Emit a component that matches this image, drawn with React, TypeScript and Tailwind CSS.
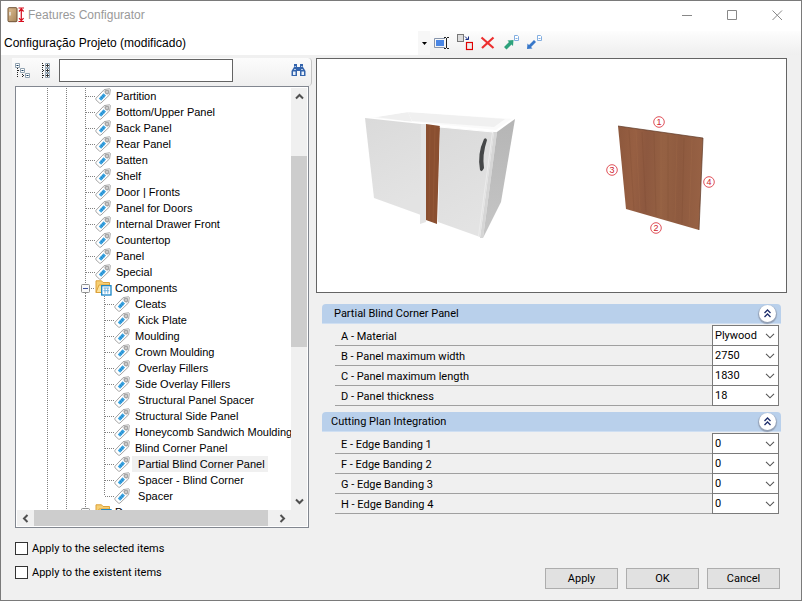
import { useId } from "react";
import type { ReactNode } from "react";

type TreeItem = { label: string; selected?: boolean };

const PANELS: TreeItem[] = [
  { label: "Partition" },
  { label: "Bottom/Upper Panel" },
  { label: "Back Panel" },
  { label: "Rear Panel" },
  { label: "Batten" },
  { label: "Shelf" },
  { label: "Door | Fronts" },
  { label: "Panel for Doors" },
  { label: "Internal Drawer Front" },
  { label: "Countertop" },
  { label: "Panel" },
  { label: "Special" },
];

const COMPONENTS: TreeItem[] = [
  { label: "Cleats" },
  { label: " Kick Plate" },
  { label: "Moulding" },
  { label: "Crown Moulding" },
  { label: " Overlay Fillers" },
  { label: "Side Overlay Fillers" },
  { label: " Structural Panel Spacer" },
  { label: "Structural Side Panel" },
  { label: "Honeycomb Sandwich Moulding" },
  { label: "Blind Corner Panel" },
  { label: " Partial Blind Corner Panel", selected: true },
  { label: " Spacer - Blind Corner" },
  { label: " Spacer" },
];

const V_DOTS = "bg-[repeating-linear-gradient(to_bottom,#808080_0_1px,transparent_1px_2px)]";
const H_DOTS = "bg-[repeating-linear-gradient(to_right,#808080_0_1px,transparent_1px_2px)]";

function TagIcon() {
  return (
    <svg width="16" height="16" viewBox="0 0 16 16" className="shrink-0">
      <path d="M1 10.2 9.2 1.6 14.6.8 15.3 1.4 14.6 6.8 6 15Q5.2 15.6 4.4 15L1 11.8Q.4 11 1 10.2Z" fill="#fff" stroke="#999" strokeWidth=".9" />
      <path d="M8.2 3.3 10 1.9 14.3 1.4 14 6 12.4 7.6Z" fill="#d2d2d2" />
      <path d="M3.8 10.4 8.6 5.2 11 7.6 6.2 12.7Z" fill="#3aa3e0" />
      <path d="M5.7 8.6 7.8 10.7M7.2 7 9.3 9.1" stroke="#1278bd" strokeWidth=".7" />
      <rect x="10.8" y="2.8" width="2.4" height="2.4" fill="#fff" stroke="#888" strokeWidth=".9" />
    </svg>
  );
}

function FolderIcon() {
  return (
    <svg width="17" height="16" viewBox="0 0 17 16" className="shrink-0">
      <path d="M1 12.5V.8H6.5L8 2.5H14.5V12.5Z" fill="#f6cf73" stroke="#dca13b" />
      <path d="M1 12.5 4 5H15V12.5Z" fill="#fde39c" stroke="#dca13b" />
      <rect x="6.7" y="5.7" width="9.3" height="9.3" fill="#fff" stroke="#1785c6" strokeWidth="1.3" />
      <path d="M8.5 8H14.2M8.5 10.7H14.2M10 8V13.5M12.8 8V13.5" stroke="#6db1df" />
    </svg>
  );
}

function Guide() {
  return (
    <span className="h-full w-[19px] shrink-0">
      <span className={`block h-full w-px ${V_DOTS}`} />
    </span>
  );
}

function Connector({ last = false }: { last?: boolean }) {
  return (
    <span className="flex h-full w-[10px] shrink-0">
      <span className={`w-px ${V_DOTS} ${last ? "h-2" : "h-full"}`} />
      <span className={`mt-2 h-px flex-1 ${H_DOTS}`} />
    </span>
  );
}

function TreeRow({ item, depth, last }: { item: TreeItem; depth: number; last?: boolean }) {
  return (
    <li role="treeitem" aria-selected={!!item.selected} className="flex h-4 items-center pl-[31px]">
      {Array.from({ length: depth }, (_, i) => (
        <Guide key={i} />
      ))}
      <Connector last={last} />
      <TagIcon />
      <span className={`ml-0.5 h-4 px-[3px] leading-4 whitespace-pre ${item.selected ? "bg-[#f0f0f0]" : ""}`}>{item.label}</span>
    </li>
  );
}

function FolderRow({ label, open }: { label: string; open: boolean }) {
  return (
    <li role="treeitem" aria-expanded={open} className="flex h-4 shrink-0 items-center pl-[31px]">
      <Guide />
      <span className="h-full w-[15px] shrink-0">
        <span className={`block h-full w-px ${V_DOTS}`} />
      </span>
      <svg width="14" height="16" viewBox="0 0 14 16" className="shrink-0">
        <path d="M4.5 0V4M4.5 13V16" stroke="#808080" strokeDasharray="1 1" />
        <rect x=".5" y="4.5" width="8" height="8" rx="1" fill="#fafafa" stroke="#8e8f8f" />
        <path d="M2 8.5H7" stroke="#3c50a0" />
        {!open && <path d="M4.5 6V11" stroke="#3c50a0" />}
        <path d="M10 8.5H14" stroke="#808080" strokeDasharray="1 1" />
      </svg>
      <FolderIcon />
      <span className="px-[3px] leading-4">{label}</span>
    </li>
  );
}

function ScrollArrow({ label, d, className }: { label: string; d: string; className: string }) {
  return (
    <button type="button" aria-label={label} className={`flex shrink-0 items-center justify-center bg-[#f0f0f0] ${className}`}>
      <svg width="9" height="9" viewBox="0 0 9 9" fill="none" stroke="#505050" strokeWidth="2">
        <path d={d} />
      </svg>
    </button>
  );
}

function FeatureTree() {
  return (
    <div className="ml-[3px] flex min-h-0 w-[294px] flex-1 flex-col border border-[#828790] bg-white p-px">
      <div className="flex min-h-0 flex-1">
        <ul role="tree" aria-label="Features" className="-ml-px min-w-0 flex-1 overflow-hidden font-['Liberation_Sans',Arial,sans-serif] text-[11px]">
          {PANELS.map((item) => (
            <TreeRow key={item.label} item={item} depth={2} />
          ))}
          <FolderRow label="Components" open />
          {COMPONENTS.map((item, i) => (
            <TreeRow key={item.label} item={item} depth={3} last={i === COMPONENTS.length - 1} />
          ))}
          <FolderRow label="Doors" open={false} />
        </ul>
        <div className="flex w-4 flex-col bg-[#f0f0f0]">
          <ScrollArrow label="Scroll up" d="M1 6.5 4.5 3 8 6.5" className="h-[17px]" />
          <div className="flex flex-1 flex-col">
            <div className="flex-[51]" />
            <div className="flex-[190] bg-[#cdcdcd]" />
            <div className="flex-[146]" />
          </div>
          <ScrollArrow label="Scroll down" d="M1 2.5 4.5 6 8 2.5" className="h-[17px]" />
        </div>
      </div>
      <div className="flex h-4 bg-[#f0f0f0]">
        <ScrollArrow label="Scroll left" d="M6.5 1 3 4.5 6.5 8" className="w-[17px]" />
        <div className="flex flex-1">
          <div className="flex-[233] bg-[#cdcdcd]" />
          <div className="flex-[6]" />
        </div>
        <ScrollArrow label="Scroll right" d="M2.5 1 6 4.5 2.5 8" className="mr-4 w-[17px]" />
      </div>
    </div>
  );
}

function TitleBar() {
  return (
    <header className="flex h-[30px] shrink-0 items-center bg-white pb-0.5 pl-1.5 font-['Liberation_Sans',Arial,sans-serif] text-xs text-[#999]">
      <svg width="18" height="16" viewBox="0 0 18 16" className="shrink-0">
        <defs>
          <linearGradient id="door" x2="1" y2="1">
            <stop stopColor="#dfbf93" />
            <stop offset="1" stopColor="#a7845a" />
          </linearGradient>
        </defs>
        <rect x="1" y=".7" width="9" height="14" rx="1" fill="url(#door)" stroke="#6e5234" />
        <path d="M3 5V8.5" stroke="#eee" strokeWidth="1.4" />
        <path d="M11.5 1H17M11.5 14.5H17M14.3 2V14M12 4.5 14.3 2 16.6 4.5M12 11.2 14.3 13.7 16.6 11.2" fill="none" stroke="#d60d1d" strokeWidth="1.2" />
      </svg>
      <h1 className="ml-[3px] flex-1">Features Configurator</h1>
      <div className="flex pr-px">
        {[
          { name: "Minimize", d: "M0 5.5H10" },
          { name: "Maximize", d: "M.5 .5H9.5V9.5H.5Z" },
          { name: "Close", d: "M.5 .5 10 10M10 .5 .5 10" },
        ].map((control) => (
          <button key={control.name} type="button" aria-label={control.name} className="flex h-7 w-[45px] items-center justify-center">
            <svg width="11" height="11" viewBox="0 0 11 11" fill="none" stroke="#888">
              <path d={control.d} />
            </svg>
          </button>
        ))}
      </div>
    </header>
  );
}

function ToolButton({ label, children }: { label: string; children: ReactNode }) {
  return (
    <button type="button" aria-label={label} className="flex h-6 w-[23px] shrink-0 items-center justify-center pb-0.5">
      <svg width="17" height="17" viewBox="0 0 17 17" fill="none">
        {children}
      </svg>
    </button>
  );
}

function ProjectToolbar() {
  return (
    <div className="flex h-6 shrink-0 bg-linear-to-b from-[#fdfdfd] to-[#efefef]">
      <div className="relative w-[429px]">
        <select
          aria-label="Project configuration"
          className="h-6 w-full appearance-none bg-white pl-[3px] font-['Liberation_Sans',Arial,sans-serif] text-xs text-black"
        >
          <option>Configuração Projeto (modificado)</option>
        </select>
        <span className="pointer-events-none absolute top-0 right-0 flex h-6 w-3 items-center justify-center bg-[#f7f7f7]">
          <svg width="5" height="3" viewBox="0 0 5 3">
            <path d="M0 0H5L2.5 3Z" fill="#000" />
          </svg>
        </span>
      </div>
      <ToolButton label="Rename">
        <path d="M12 4.5H1.5V13.5H12" stroke="#8795ac" />
        <rect x="3" y="6" width="8" height="6" fill="#4a86e4" />
        <path d="M11 3.5H13M14 3.5H16M11 14.5H13M14 14.5H16M13.5 4V14" stroke="#222" />
      </ToolButton>
      <ToolButton label="Duplicate">
        <rect x="1.5" y=".5" width="6" height="7" fill="#ddd" stroke="#777" />
        <path d="M9 2.5 12 5.5M12.5 2.5V5.5H9.5" stroke="#142b83" />
        <rect x="10.5" y="8.500" width="6" height="7" fill="#eee" stroke="#e00000" strokeWidth="1.2" />
      </ToolButton>
      <ToolButton label="Delete">
        <path d="M2.5 3.5 14.5 14M14.5 3.5 3 14" stroke="#ec2f2f" strokeWidth="2.2" />
      </ToolButton>
      <ToolButton label="Export">
        <path d="M2 13 7 8 5.5 6.5 11.5 6 11 12 9.5 10.5 4.5 15.5Z" fill="#2da27c" />
        <path d="M12.5 1.5H15.500L16.5 2.5V6.5H12.5ZM13.500 4.5H15.5" fill="#fff" stroke="#83aee0" />
      </ToolButton>
      <ToolButton label="Import">
        <path d="M2 15 2.5 9.5 4 11 9 6 11 8 6 13 7.500 14.5Z" fill="#3777c9" />
        <path d="M12.5 1.5H15.500L16.5 2.5V6.5H12.5ZM13.500 4.5H15.5" fill="#fff" stroke="#83aee0" />
      </ToolButton>
    </div>
  );
}

function SearchToolbar() {
  return (
    <div className="flex h-7 shrink-0 items-center rounded-r border-r border-[#c4c4c4] bg-linear-to-b from-[#fcfcfc] to-[#efefef] pb-1 pl-[3px]">
      <button type="button" aria-label="Collapse all" className="w-[23px]">
        <svg width="16" height="17" viewBox="0 0 16 17" fill="none">
          <path d="M2.5 6V16M7.5 10V16M3 8.5H6M8 13.5H11" stroke="#222" strokeDasharray="1 1" />
          <path d="M.5 1.5H4.5V5.5H.5ZM5.5 6.5H9.5V10.5H5.5ZM10.5 11.5H14.5V15.5H10.5Z" fill="#fff" stroke="#91a2b0" />
          <path d="M1.5 3.5H3.5M6.5 8.5H8.5M11.5 13.5H13.5" stroke="#173e60" />
        </svg>
      </button>
      <button type="button" aria-label="Expand all" className="w-[21px] pl-[3px]">
        <svg width="10" height="17" viewBox="0 0 10 17" fill="none">
          <path d="M1.5 1V16M2 3.5H4M2 8.5H4M2 13.5H4" stroke="#222" strokeDasharray="1 1" />
          <path d="M4.5 1.5H8.5V5.5H4.5ZM4.5 6.5H8.5V10.5H4.5ZM4.5 11.5H8.5V15.5H4.5Z" fill="#fff" stroke="#91a2b0" />
          <path d="M5 3.5H8M6.5 2V5M5 8.5H8M6.5 7V10M5 13.5H8M6.5 12V15" stroke="#333" />
        </svg>
      </button>
      <input type="text" aria-label="Search features" className="h-[23px] w-[174px] border border-[#646464] bg-white px-1 text-[11px] outline-none" />
      <button type="button" aria-label="Find" className="mr-[5px] ml-auto">
        <svg width="15" height="14" viewBox="0 0 15 14">
          <path d="M3 1H6V4H9V1H12V4L14.5 8V13H9V8H6V13H.5V8L3 4Z" fill="#3464ac" />
          <path d="M2 8.5H4.5V12H2ZM10.5 8.5H13V12H10.5Z" fill="#e9f1fb" />
          <path d="M3.5 3.5H5M10 3.5H11.5M3 6.5H5M10 6.5H12" stroke="#b5cbea" />
        </svg>
      </button>
    </div>
  );
}

function Callout({ x, y, n }: { x: number; y: number; n: number }) {
  return (
    <g>
      <circle cx={x} cy={y} r="5.3" fill="#fff" stroke="#dc4048" strokeWidth=".9" />
      <text x={x} y={y + 3} textAnchor="middle" fontSize="9" fill="#cf232c">
        {n}
      </text>
    </g>
  );
}

function Preview() {
  return (
    <div className="flex aspect-[471/235] items-center border border-[#646464] bg-white">
      <svg viewBox="317 59 469 233" className="h-full w-full" role="img" aria-label="Partial blind corner panel preview">
        <defs>
          <linearGradient id="front" x2=".3" y2="1">
            <stop stopColor="#dadada" />
            <stop offset="1" stopColor="#e3e3e3" />
          </linearGradient>
          <linearGradient id="side" x2="0" y2="1">
            <stop stopColor="#b5b5b5" />
            <stop offset="1" stopColor="#c6c6c6" />
          </linearGradient>
          <linearGradient id="grain" x2="1" y2=".05">
            <stop stopColor="#8d583d" />
            <stop offset=".2" stopColor="#975f42" />
            <stop offset=".35" stopColor="#8d583f" />
            <stop offset=".55" stopColor="#956143" />
            <stop offset=".75" stopColor="#8e5a3f" />
            <stop offset="1" stopColor="#976144" />
          </linearGradient>
        </defs>
        <path d="M364 118 408 111 515 118 497 132Z" fill="#fafafa" />
        <path d="M376 117 408 112 412 122Z" fill="#efefef" />
        <path d="M408 112 505 119 494 127 412 121Z" fill="#f0f0f0" />
        <path d="M364 118 408 111 515 118 496 131Z" fill="none" stroke="#fff" strokeWidth="2" />
        <path d="M365 118 421 124 421 215 374 198Z" fill="url(#front)" />
        <path d="M421 124 426 124 426 222 420 224Z" fill="#e5e5e5" />
        <path d="M426 124 440 126 437 224 426 220Z" fill="#8a4f30" />
        <path d="M430 125 429 221M435 126 433 222" stroke="#9b5e3c" strokeWidth="1" opacity=".5" />
        <path d="M440 127 494 132 480 237 438 222Z" fill="url(#front)" />
        <path d="M494 132 497 132 483 238 480 238Z" fill="#d6d6d6" />
        <path d="M492.5 132 478.5 236" stroke="#ececec" />
        <path d="M497 132 515 119 501 202 483 238Z" fill="url(#side)" />
        <path d="M439.5 127 493 132" stroke="#fff" />
        <path d="M484 139Q477 154 480 170Q482 173 484 168Q482 155 487 140Q486 137 484 139Z" fill="#454748" />
        <path d="M618 126 703 138 699 230 626 209Z" fill="url(#grain)" />
        <path d="M618 126 703 138 699 230" fill="none" stroke="#5c3624" strokeWidth=".7" />
        <path d="M629 130 634 210M642 132 646 212M654 133 656 216M668 135 668 219M684 138 682 223" stroke="#704129" strokeWidth=".8" opacity=".22" />
        <path d="M636 130 640 211M661 134 661 217M677 137 675 221M692 139 689 226" stroke="#b37852" strokeWidth=".8" opacity=".22" />
        <g className="font-['Liberation_Sans',Arial,sans-serif]">
          <Callout x={659} y={122} n={1} />
          <Callout x={656} y={228} n={2} />
          <Callout x={612} y={170} n={3} />
          <Callout x={709} y={182} n={4} />
        </g>
      </svg>
    </div>
  );
}

function Field({ label, value }: { label: string; value: string }) {
  const id = useId();
  return (
    <div className="flex h-5">
      <label htmlFor={id} className="flex-1 border-b border-[#a0a0a0] pt-px pl-1.5 leading-5">
        {label}
      </label>
      <span className="relative -mt-px h-[21px] w-[67px]">
        <select id={id} className="h-full w-full appearance-none border border-[#7a7a7a] bg-white pt-px pl-[2px] outline-none">
          <option>{value}</option>
        </select>
        <svg width="10" height="6" viewBox="0 0 10 6" fill="none" className="pointer-events-none absolute top-2 right-1">
          <path d="M1 .8 5 4.8 9 .8" stroke="#555" strokeWidth="1.1" />
        </svg>
      </span>
    </div>
  );
}

function Section({ title, fields, titleClass }: { title: string; fields: [string, string][]; titleClass: string }) {
  return (
    <section>
      <div className={`flex h-5 items-center justify-between rounded-t-[4px] border-b border-[#cfdff2] bg-[#b9d0eb] pr-[5px] ${titleClass}`}>
        <h2 className="pt-px">{title}</h2>
        <button type="button" aria-label={`Collapse ${title}`} className="flex size-[17px] items-center justify-center rounded-full bg-white shadow-[0_1px_1px_1px_#93a0b5]">
          <svg width="9" height="9" viewBox="0 0 9 9" fill="none" stroke="#1d2d6c" strokeWidth="1.3">
            <path d="M1.5 4 4.5 1 7.5 4M1.5 8 4.5 5 7.5 8" />
          </svg>
        </button>
      </div>
      <div className="mt-0.5 mr-0.5 ml-[13px]">
        {fields.map(([label, value]) => (
          <Field key={label} label={label} value={value} />
        ))}
      </div>
    </section>
  );
}

function CheckOption({ label }: { label: string }) {
  return (
    <label className="flex h-6 items-center gap-1">
      <input type="checkbox" className="size-[13px] appearance-none border border-[#333] bg-white" />
      <span className="pt-0.5">{label}</span>
    </label>
  );
}

export default function App() {
  return (
    <main className="flex h-screen flex-col overflow-hidden border border-[#7a7a7a] bg-[#f0f0f0] font-[Roboto,'Liberation_Sans',sans-serif] text-[11px] text-black">
      <TitleBar />
      <ProjectToolbar />
      <div className="flex min-h-0 flex-1 pt-[3px]">
        <div className="ml-[11px] flex w-[300px] shrink-0 flex-col">
          <SearchToolbar />
          <FeatureTree />
          <div className="mt-2 mb-4 ml-[3px]">
            <CheckOption label="Apply to the selected items" />
            <CheckOption label="Apply to the existent items" />
          </div>
        </div>
        <div className="flex min-w-0 flex-1 flex-col pr-[14px] pl-1">
          <Preview />
          <div className="mt-[11px] mr-[6px] ml-[6px] flex flex-col gap-[6px]">
            <Section
              title="Partial Blind Corner Panel"
              titleClass="pl-3"
              fields={[
                ["A - Material", "Plywood"],
                ["B - Panel maximum width", "2750"],
                ["C - Panel maximum length", "1830"],
                ["D - Panel thickness", "18"],
              ]}
            />
            <Section
              title="Cutting Plan Integration"
              titleClass="pl-[9px]"
              fields={[
                ["E - Edge Banding 1", "0"],
                ["F - Edge Banding 2", "0"],
                ["G - Edge Banding 3", "0"],
                ["H - Edge Banding 4", "0"],
              ]}
            />
          </div>
          <div className="mt-auto mr-[7px] mb-[11px] flex justify-end gap-2">
            {["Apply", "OK", "Cancel"].map((name) => (
              <button key={name} type="button" className="h-[21px] w-[73px] border border-[#adadad] bg-[#e1e1e1] pt-px">
                {name}
              </button>
            ))}
          </div>
        </div>
      </div>
    </main>
  );
}
